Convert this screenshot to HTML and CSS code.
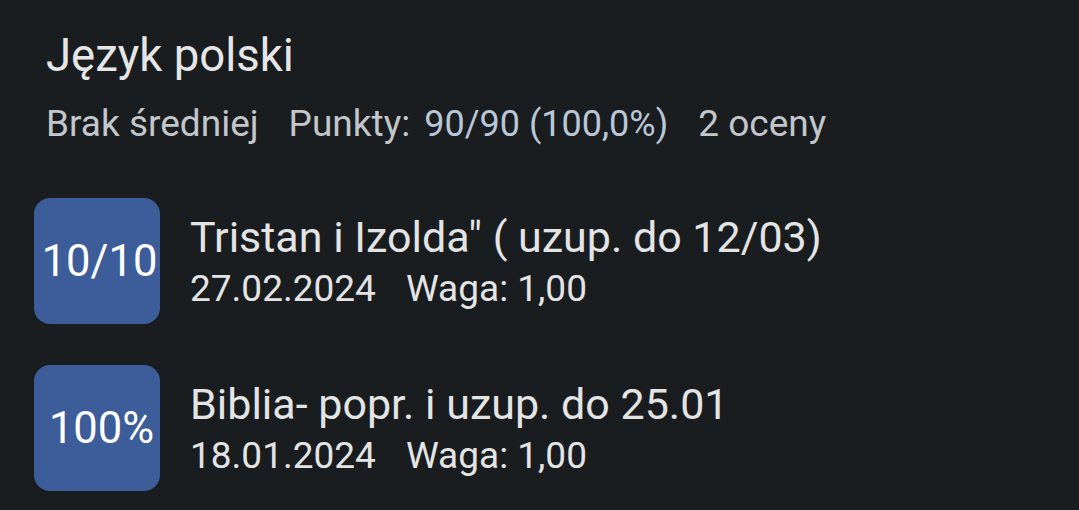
FILE: index.html
```html
<!DOCTYPE html>
<html lang="pl">
<head>
<meta charset="utf-8">
<link rel="stylesheet" href="styles.css">
</head>
<body>
<main class="subject">
  <h1 class="subject-title">Język polski</h1>
  <div class="summary">
    <span class="avg">Brak średniej</span>
    <span class="points">Punkty: <span class="points-val">90/90 (100,0%)</span></span>
    <span class="count">2 oceny</span>
  </div>
  <ul class="grades">
    <li class="grade">
      <div class="badge">10/10</div>
      <div class="grade-info">
        <div class="grade-title">Tristan i Izolda" ( uzup. do 12/03)</div>
        <div class="grade-meta"><span>27.02.2024</span><span>Waga: 1,00</span></div>
      </div>
    </li>
    <li class="grade">
      <div class="badge badge-pct">100%</div>
      <div class="grade-info">
        <div class="grade-title">Biblia- popr. i uzup. do 25.01</div>
        <div class="grade-meta"><span>18.01.2024</span><span>Waga: 1,00</span></div>
      </div>
    </li>
  </ul>
</main>
</body>
</html>
```

FILE: styles.css
```css
html, body {
  margin: 0;
  padding: 0;
  background: #1a1d20;
  font-family: Roboto, "Noto Sans", sans-serif;
}
.subject {
  padding: 28px 0 0 46px;
  width: 1079px;
  height: 510px;
  box-sizing: border-box;
  overflow: hidden;
}
.subject-title {
  margin: 0;
  font-size: 45.5px;
  font-weight: 400;
  line-height: 56px;
  color: #e6e6e7;
}
.summary {
  display: flex;
  align-items: baseline;
  gap: 30px;
  margin-top: 18px;
  font-size: 37px;
  line-height: 44px;
  color: #c3c6ca;
}
.points-val {
  font-size: 36px;
  color: #b9c7d8;
  margin-left: 5px;
}
.grades {
  list-style: none;
  margin: 52px 0 0 -12px;
  padding: 0;
  display: flex;
  flex-direction: column;
  gap: 41px;
}
.grade {
  display: flex;
  align-items: center;
  gap: 30px;
}
.badge {
  width: 126px;
  height: 126px;
  flex: none;
  border-radius: 16px;
  background: #3d5d9a;
  color: #ffffff;
  font-size: 43.5px;
  display: flex;
  align-items: center;
  justify-content: center;
  padding-left: 5px;
  box-sizing: border-box;
}
.badge-pct {
  padding-left: 9px;
}
.grade-info {
  display: flex;
  flex-direction: column;
  color: #e4e4e5;
}
.grade-title {
  font-size: 43px;
  line-height: 52px;
}
.grade-meta {
  display: flex;
  gap: 30px;
  margin-top: 4px;
  font-size: 37px;
  line-height: 44px;
}
```
